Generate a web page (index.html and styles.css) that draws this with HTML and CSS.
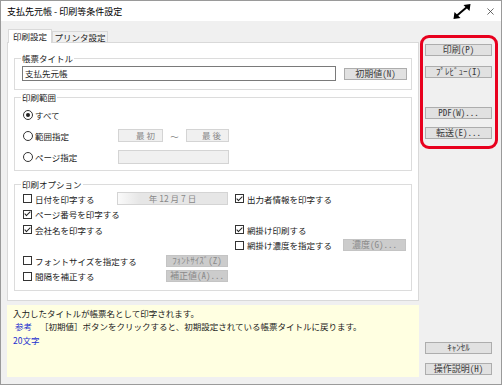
FILE: index.html
```html
<!DOCTYPE html>
<html lang="ja">
  <head>
    <meta charset="UTF-8" />
    <meta name="viewport" content="width=device-width, initial-scale=1.0" />
    <title>支払先元帳 - 印刷等条件設定</title>
    <link rel="stylesheet" href="styles.css">
  </head>
  <body>
    <div class="window">
      <div class="titlebar">
        <span class="title">支払先元帳 - 印刷等条件設定</span>
        <svg class="expand" viewBox="0 0 18 15">
          <line x1="4" y1="11.5" x2="14" y2="3" stroke="#000" stroke-width="2" />
          <polygon points="17.5,0 10.5,1 16.5,7" fill="#000" />
          <polygon points="0.5,15 1.5,8 7.5,14" fill="#000" />
        </svg>
        <svg class="close" viewBox="0 0 8 8">
          <line x1="0.5" y1="0.5" x2="7.5" y2="7.5" stroke="#444" stroke-width="0.9" />
          <line x1="7.5" y1="0.5" x2="0.5" y2="7.5" stroke="#444" stroke-width="0.9" />
        </svg>
      </div>

      <div class="content">
        <div class="left">
          <div class="tabs">
            <div class="tab active">印刷設定</div>
            <div class="tab">プリンタ設定</div>
          </div>

          <div class="panel">
            <div class="group g-title">
              <span class="legend">帳票タイトル</span>
              <div class="title-row">
                <div class="textbox">支払先元帳</div>
                <button type="button" class="btn w63">初期値(N)</button>
              </div>
            </div>

            <div class="group g-range">
              <span class="legend">印刷範囲</span>
              <div class="radio-row">
                <span class="rlabel"><span class="radio on"></span>すべて</span>
              </div>
              <div class="radio-row">
                <span class="rlabel"><span class="radio"></span>範囲指定</span>
                <div class="field f-from">最 初</div>
                <span class="tilde">～</span>
                <div class="field f-to">最 後</div>
              </div>
              <div class="radio-row">
                <span class="rlabel"><span class="radio"></span>ページ指定</span>
                <div class="field f-page"></div>
              </div>
            </div>

            <div class="group g-opts">
              <span class="legend">印刷オプション</span>

              <span class="opt c1"><span class="chk"></span>日付を印字する</span>
              <div class="field f-date">年 12 月 7 日</div>
              <span class="opt c3 span2"><span class="chk on"></span>出力者情報を印字する</span>

              <span class="opt c1 wide"><span class="chk on"></span>ページ番号を印字する</span>

              <span class="opt c1 wide"><span class="chk on"></span>会社名を印字する</span>
              <span class="opt c3 span2"><span class="chk on"></span>網掛け印刷する</span>

              <span class="opt c3 r4"><span class="chk"></span>網掛け濃度を指定する</span>
              <button type="button" class="btn dis w63 c4">濃度(G)...</button>

              <span class="opt c1"><span class="chk"></span>フォントサイズを指定する</span>
              <button type="button" class="btn dis w62 c2">ﾌｫﾝﾄｻｲｽﾞ(Z)</button>

              <span class="opt c1"><span class="chk"></span>間隔を補正する</span>
              <button type="button" class="btn dis w62 c2">補正値(A)...</button>
            </div>
          </div>

          <div class="help">
            <div>入力したタイトルが帳票名として印字されます。</div>
            <div><span class="ref">参考</span>［初期値］ボタンをクリックすると、初期設定されている帳票タイトルに戻ります。</div>
            <div class="ref">20文字</div>
          </div>
        </div>

        <div class="right">
          <div class="highlight">
            <button type="button" class="btn side">印刷(P)</button>
            <button type="button" class="btn side b-prev">ﾌﾟﾚﾋﾞｭｰ(I)</button>
            <button type="button" class="btn side b-pdf">PDF(W)...</button>
            <button type="button" class="btn side b-send">転送(E)...</button>
          </div>
          <div class="bottom-btns">
            <button type="button" class="btn side">ｷｬﾝｾﾙ</button>
            <button type="button" class="btn side b-help">操作説明(H)</button>
          </div>
        </div>
      </div>
    </div>
  </body>
</html>
```

FILE: styles.css
```css
* {
  box-sizing: border-box;
}
body {
  margin: 0;
  font-family: "Noto Sans CJK JP", "Noto Sans", sans-serif;
  font-size: 8.5px;
  color: #1a1a1a;
}
.window {
  width: 502px;
  height: 385px;
  border: 1px solid #9a9a9a;
  background-color: #f0f0f0;
  display: flex;
  flex-direction: column;
}
.titlebar {
  height: 20px;
  flex-shrink: 0;
  background-color: #fff;
  display: flex;
  align-items: center;
  padding-left: 6px;
}
.title {
  flex: 1;
  font-size: 9px;
  color: #000;
}
.expand {
  width: 18px;
  height: 15px;
  margin-right: 16px;
}
.close {
  width: 7px;
  height: 7px;
  margin-right: 7px;
}
.content {
  flex: 1;
  display: flex;
  padding-left: 6px;
}
.left {
  width: 412px;
  display: flex;
  flex-direction: column;
  padding-top: 8px;
}
.tabs {
  display: flex;
  align-items: flex-end;
  height: 13px;
  padding-left: 1px;
}
.tab {
  height: 11px;
  width: 56px;
  text-align: center;
  line-height: 10px;
  border: 1px solid #d9d9d9;
  border-bottom: none;
  background-color: #f0f0f0;
}
.tab.active {
  width: 44px;
  height: 14px;
  line-height: 13px;
  margin-bottom: -1px;
  background-color: #fff;
  position: relative;
  z-index: 1;
}
.panel {
  height: 259px;
  background-color: #fff;
  border: 1px solid #d9d9d9;
  padding: 0 6px;
}
.group {
  position: relative;
  border: 1px solid #dcdcdc;
}
.legend {
  position: absolute;
  top: -7px;
  left: 6px;
  padding: 0 1px;
  line-height: 12px;
  background-color: #fff;
}
.g-title {
  margin-top: 15px;
  padding: 7px 4px 8px 7px;
}
.title-row {
  display: flex;
  align-items: center;
}
.textbox {
  width: 314px;
  height: 15px;
  margin-right: 8px;
  border: 1px solid #7a7a7a;
  padding-left: 2px;
  line-height: 13px;
}
.g-range {
  margin-top: 7px;
  padding: 6px 0 3px 8px;
}
.radio-row {
  height: 21px;
  display: flex;
  align-items: center;
}
.rlabel {
  width: 95px;
  display: flex;
  align-items: center;
}
.radio {
  width: 10px;
  height: 10px;
  margin-right: 2px;
  border: 1px solid #333;
  border-radius: 50%;
  background-color: #fff;
  display: inline-flex;
  align-items: center;
  justify-content: center;
}
.radio.on::after {
  content: "";
  width: 4px;
  height: 4px;
  border-radius: 50%;
  background-color: #222;
}
.field {
  height: 13px;
  border: 1px solid #d4d4d4;
  background-color: #f0f0f0;
  color: #888;
  line-height: 11px;
  text-align: right;
  padding-right: 7px;
}
.f-from {
  width: 45px;
}
.f-to {
  width: 43px;
}
.tilde {
  width: 23px;
  text-align: center;
  color: #888;
}
.f-page {
  width: 111px;
  height: 14px;
}
.g-opts {
  margin-top: 13px;
  padding: 6px 0 6px 0;
  display: grid;
  grid-template-columns: 102px 111px 115px 63px;
  grid-auto-rows: 15.5px;
  align-items: center;
}
.opt {
  display: flex;
  align-items: center;
  white-space: nowrap;
}
.opt.c1 {
  grid-column: 1;
  padding-left: 8px;
}
.opt.c1.wide {
  grid-column: 1 / span 2;
}
.opt.c3 {
  grid-column: 3;
  padding-left: 7px;
}
.opt.span2 {
  grid-column: 3 / span 2;
}
.opt.r4 {
  grid-row: 4;
}
.c2 {
  grid-column: 2;
  justify-self: end;
}
.c4 {
  grid-column: 4;
}
.chk {
  width: 9px;
  height: 9px;
  margin-right: 3px;
  border: 1px solid #333;
  background-color: #fff;
  display: inline-flex;
  align-items: center;
  justify-content: center;
  flex-shrink: 0;
}
.chk.on::after {
  content: "";
  width: 2px;
  height: 5px;
  border: solid #222;
  border-width: 0 1px 1px 0;
  transform: translateY(-1px) rotate(45deg);
}
.f-date {
  height: 13px;
  text-align: center;
  padding-right: 0;
  background: linear-gradient(to right, #fafafa, #e6e6e6 20%);
}
.btn {
  height: 12px;
  padding: 0;
  border: 1px solid #adadad;
  background-color: #e1e1e1;
  color: #3a3a3a;
  font-family: "Noto Sans Mono CJK JP", "Noto Sans CJK JP", monospace;
  font-size: 9px;
  line-height: 10px;
}
.btn.dis {
  background-color: #cccccc;
  border-color: #c4c4c4;
  color: #8a8a8a;
}
.w63 {
  width: 63px;
}
.w62 {
  width: 62px;
}
.help {
  margin-top: 4px;
  height: 72px;
  background-color: #ffffe1;
  padding: 2px 6px;
  line-height: 13.3px;
  white-space: nowrap;
}
.ref {
  color: #1d2fd0;
}
.help span.ref {
  margin: 0 8px 0 2px;
}
.right {
  width: 78px;
  margin-left: 1px;
  display: flex;
  flex-direction: column;
  padding-top: 14px;
  padding-bottom: 9px;
}
.highlight {
  border: 3px solid #e8001e;
  border-radius: 9px;
  padding: 6px 0 7px 2px;
  display: flex;
  flex-direction: column;
}
.side {
  width: 67px;
}
.b-prev {
  margin-top: 10px;
}
.b-pdf {
  margin-top: 29px;
}
.b-send {
  margin-top: 8px;
}
.bottom-btns {
  margin-top: auto;
  padding-left: 5px;
  display: flex;
  flex-direction: column;
}
.b-help {
  margin-top: 9px;
}
```
